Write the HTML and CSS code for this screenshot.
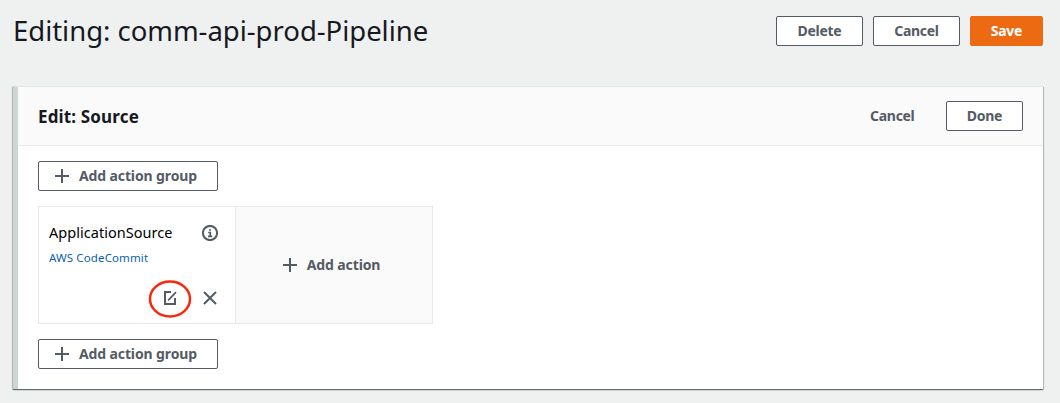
FILE: index.html
```html
<!DOCTYPE html>
<html lang="en">
<head>
<meta charset="utf-8">
<title>Editing: comm-api-prod-Pipeline</title>
<link rel="stylesheet" href="styles.css">
</head>
<body>
<header class="page-header">
  <h1 class="page-title">Editing: comm-api-prod-Pipeline</h1>
  <div class="page-actions">
    <button class="btn btn-wide"><span>Delete</span></button>
    <button class="btn btn-wide"><span>Cancel</span></button>
    <button class="btn btn-primary"><span>Save</span></button>
  </div>
</header>
<main class="stage">
  <div class="stage-header">
    <h2 class="stage-title">Edit: Source</h2>
    <div class="stage-actions">
      <button class="btn btn-link"><span>Cancel</span></button>
      <button class="btn btn-done"><span>Done</span></button>
    </div>
  </div>
  <div class="stage-body">
    <button class="btn btn-group">
      <svg class="plus" viewBox="0 0 14 14"><path d="M7 0v14M0 7h14"/></svg>
      <span>Add action group</span>
    </button>
    <div class="action-row">
      <section class="action-card">
        <div class="action-head">
          <span class="action-name">ApplicationSource</span>
          <svg class="icon" viewBox="0 0 16 16"><circle cx="8" cy="8" r="7.1"/><path class="thin" d="M7 5h2M6.2 7.5h2.1V11M6 11.3h4.2"/></svg>
        </div>
        <a class="provider">AWS CodeCommit</a>
        <div class="action-tools">
          <span class="edit">
            <svg class="icon" viewBox="0 0 16 16"><path d="M9 2H3v12h10V8"/><path class="thin" d="M6.2 10.3L14 2.2"/></svg>
            <svg class="highlight" viewBox="0 0 44 40"><ellipse cx="22" cy="20" rx="20" ry="17.5"/></svg>
          </span>
          <svg class="icon" viewBox="0 0 16 16"><path d="M2 2l12 12M14 2L2 14"/></svg>
        </div>
      </section>
      <button class="add-action">
        <svg class="plus" viewBox="0 0 14 14"><path d="M7 0v14M0 7h14"/></svg>
        <span>Add action</span>
      </button>
    </div>
    <button class="btn btn-group">
      <svg class="plus" viewBox="0 0 14 14"><path d="M7 0v14M0 7h14"/></svg>
      <span>Add action group</span>
    </button>
  </div>
</main>
</body>
</html>
```
FILE: styles.css
```css
* { box-sizing: border-box; }
body {
  margin: 0;
  height: 403px;
  overflow: hidden;
  padding: 16px 17px 0 13px;
  background: #eff1f1;
  color: #16191f;
  font-family: "Noto Sans", "Open Sans", sans-serif;
}
button { font-family: inherit; }
.page-header {
  display: flex;
  justify-content: space-between;
  height: 70px;
}
.page-title {
  margin: 0;
  font-size: 27.5px;
  font-weight: 400;
  line-height: 30px;
  letter-spacing: -0.03px;
  white-space: nowrap;
}
.page-actions { display: flex; gap: 10px; }
.btn {
  display: flex;
  align-items: center;
  justify-content: center;
  height: 30px;
  padding: 0;
  border: 1px solid #545b64;
  border-radius: 2px;
  background: #fff;
  color: #545b64;
  font-size: 14px;
  font-weight: 700;
  line-height: 20px;
  letter-spacing: -0.3px;
}
.btn-wide { width: 87px; }
.btn-primary {
  width: 73px;
  border-color: #ec6a12;
  background: #ec6a12;
  color: #fff;
}
.stage {
  height: 303px;
  border-top: 1px solid #e3e8e7;
  border-left: 5px solid #cdd6d4;
  background: #fff;
  box-shadow: 0 1px 1px 0 rgba(0, 28, 36, .4), 1px 1px 1px 0 rgba(0, 28, 36, .2), -1px 1px 1px 0 rgba(0, 28, 36, .2);
}
.stage-header {
  display: flex;
  align-items: center;
  justify-content: space-between;
  height: 59px;
  padding: 0 20px;
  border-bottom: 1px solid #e6eae9;
  background: #fafafa;
}
.stage-title {
  margin: 2px 0 0;
  font-size: 17px;
  line-height: 22px;
  letter-spacing: 0.15px;
}
.stage-actions { display: flex; gap: 31.5px; }
.btn-link { border: 0; background: none; }
.btn-done { width: 77px; }
.stage-body { padding: 15px 20px; }
.btn-group {
  justify-content: flex-start;
  gap: 10px;
  width: 180px;
  padding-left: 16px;
  letter-spacing: -0.12px;
}
.plus {
  width: 14px;
  height: 14px;
  fill: none;
  stroke: #545b64;
  stroke-width: 2;
}
.action-row {
  display: flex;
  width: 395px;
  height: 118px;
  margin: 15px 0;
  border: 1px solid #e6eae9;
}
.action-card {
  width: 197px;
  padding: 16px 17px 0 10px;
  border-right: 1px solid #e6eae9;
}
.action-head {
  display: flex;
  align-items: center;
  justify-content: space-between;
  height: 20px;
}
.action-name {
  padding-bottom: 2px;
  color: #000;
  font-size: 14.5px;
  letter-spacing: 0.03px;
}
.icon {
  display: block;
  width: 16px;
  height: 16px;
  fill: none;
  stroke: #545b64;
  stroke-width: 2;
}
.thin { stroke-width: 1.7; }
.provider {
  display: block;
  margin-top: 6px;
  color: #0d5fa8;
  font-size: 11.5px;
  line-height: 18px;
  letter-spacing: 0.12px;
}
.action-tools {
  display: flex;
  justify-content: flex-end;
  gap: 24px;
  margin-top: 23px;
}
.edit { position: relative; }
.highlight {
  position: absolute;
  left: -14px;
  top: -11.5px;
  width: 44px;
  height: 40px;
  fill: none;
  stroke: #f6290c;
  stroke-width: 2.5;
}
.add-action {
  display: flex;
  flex: 1;
  align-items: center;
  justify-content: center;
  gap: 10px;
  padding: 0 5px 0 0;
  border: 0;
  background: #fafafa;
  color: #545b64;
  font-size: 14px;
  font-weight: 700;
  letter-spacing: -0.1px;
}
.add-action span { padding-bottom: 2px; }
```
